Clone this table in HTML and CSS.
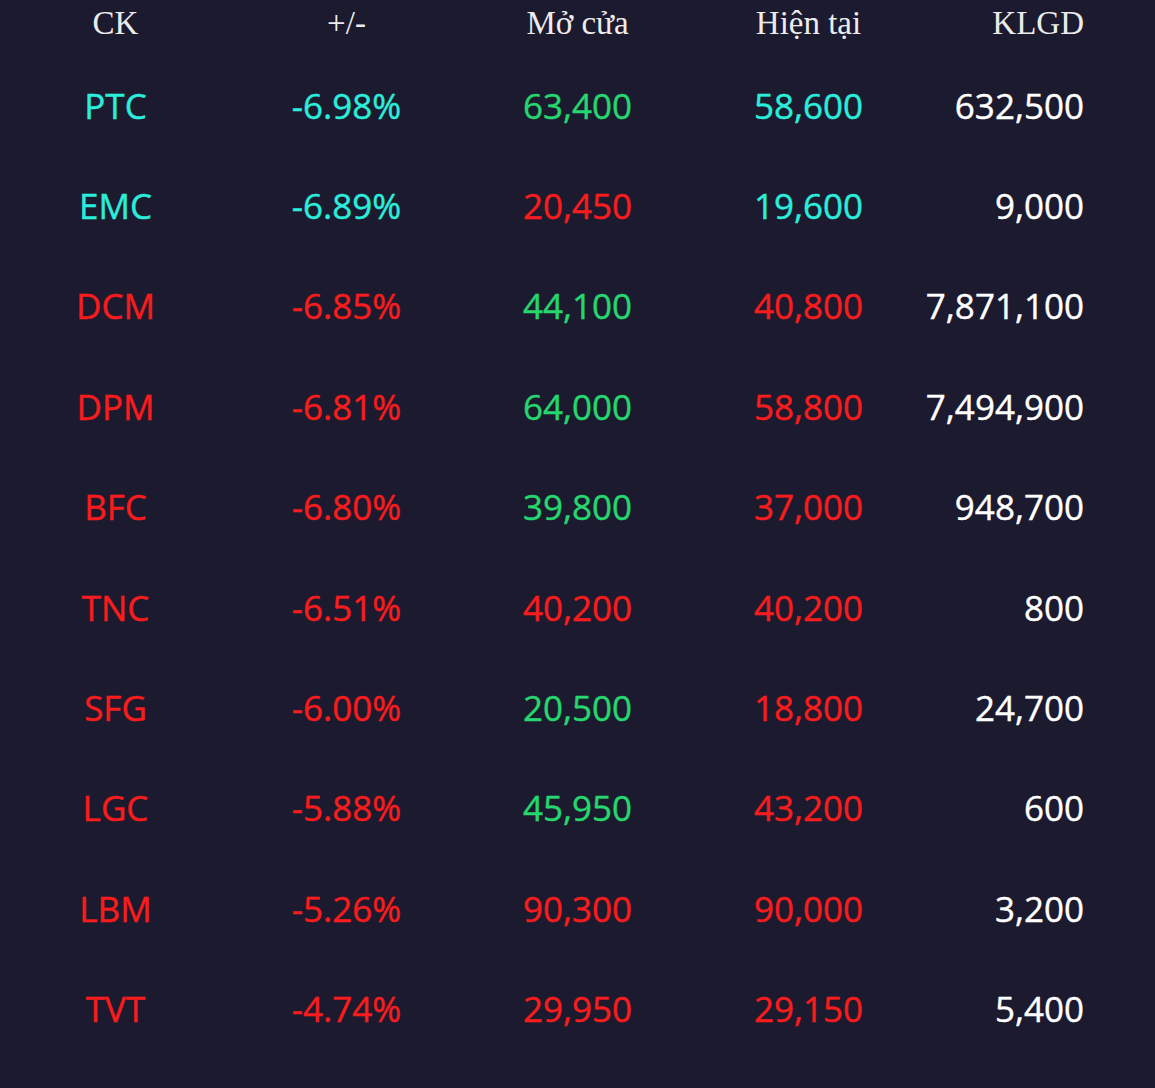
FILE: index.html
```html
<!DOCTYPE html>
<html lang="vi">
<head>
<meta charset="utf-8">
<title>Bảng giá</title>
<link rel="stylesheet" href="styles.css">
</head>
<body>
<div class="board">
  <div class="row head">
    <div class="cell">CK</div>
    <div class="cell">+/-</div>
    <div class="cell">Mở cửa</div>
    <div class="cell">Hiện tại</div>
    <div class="cell vol">KLGD</div>
  </div>
  <div class="row">
    <div class="cell floor">PTC</div><div class="cell floor">-6.98%</div><div class="cell up">63,400</div><div class="cell floor">58,600</div><div class="cell vol">632,500</div>
  </div>
  <div class="row">
    <div class="cell floor">EMC</div><div class="cell floor">-6.89%</div><div class="cell down">20,450</div><div class="cell floor">19,600</div><div class="cell vol">9,000</div>
  </div>
  <div class="row">
    <div class="cell down">DCM</div><div class="cell down">-6.85%</div><div class="cell up">44,100</div><div class="cell down">40,800</div><div class="cell vol">7,871,100</div>
  </div>
  <div class="row">
    <div class="cell down">DPM</div><div class="cell down">-6.81%</div><div class="cell up">64,000</div><div class="cell down">58,800</div><div class="cell vol">7,494,900</div>
  </div>
  <div class="row">
    <div class="cell down">BFC</div><div class="cell down">-6.80%</div><div class="cell up">39,800</div><div class="cell down">37,000</div><div class="cell vol">948,700</div>
  </div>
  <div class="row">
    <div class="cell down">TNC</div><div class="cell down">-6.51%</div><div class="cell down">40,200</div><div class="cell down">40,200</div><div class="cell vol">800</div>
  </div>
  <div class="row">
    <div class="cell down">SFG</div><div class="cell down">-6.00%</div><div class="cell up">20,500</div><div class="cell down">18,800</div><div class="cell vol">24,700</div>
  </div>
  <div class="row">
    <div class="cell down">LGC</div><div class="cell down">-5.88%</div><div class="cell up">45,950</div><div class="cell down">43,200</div><div class="cell vol">600</div>
  </div>
  <div class="row">
    <div class="cell down">LBM</div><div class="cell down">-5.26%</div><div class="cell down">90,300</div><div class="cell down">90,000</div><div class="cell vol">3,200</div>
  </div>
  <div class="row">
    <div class="cell down">TVT</div><div class="cell down">-4.74%</div><div class="cell down">29,950</div><div class="cell down">29,150</div><div class="cell vol">5,400</div>
  </div>
</div>
</body>
</html>
```
FILE: styles.css
```css
html, body {
  margin: 0;
  padding: 0;
  background: #1c1a2e;
}
.board {
  width: 1155px;
}
.row {
  display: grid;
  grid-template-columns: repeat(5, 1fr);
  height: 100.4px;
  line-height: 100.4px;
  font-family: "Open Sans", "Noto Sans", sans-serif;
  font-weight: 400;
  font-size: 35px;
  -webkit-text-stroke: 0.4px currentColor;
  color: #ffffff;
}
.row.head {
  height: 46px;
  line-height: 46px;
  padding-bottom: 9.7px;
  font-family: "Liberation Serif", "Times New Roman", serif;
  font-weight: 400;
  font-size: 33px;
  -webkit-text-stroke: 0;
  color: #ececec;
}
.cell {
  text-align: center;
  white-space: nowrap;
}
.cell.vol {
  text-align: right;
  padding-right: 71px;
}
.floor { color: #2aeedb; }
.up { color: #26d66e; }
.down { color: #fa1c1c; }
```
